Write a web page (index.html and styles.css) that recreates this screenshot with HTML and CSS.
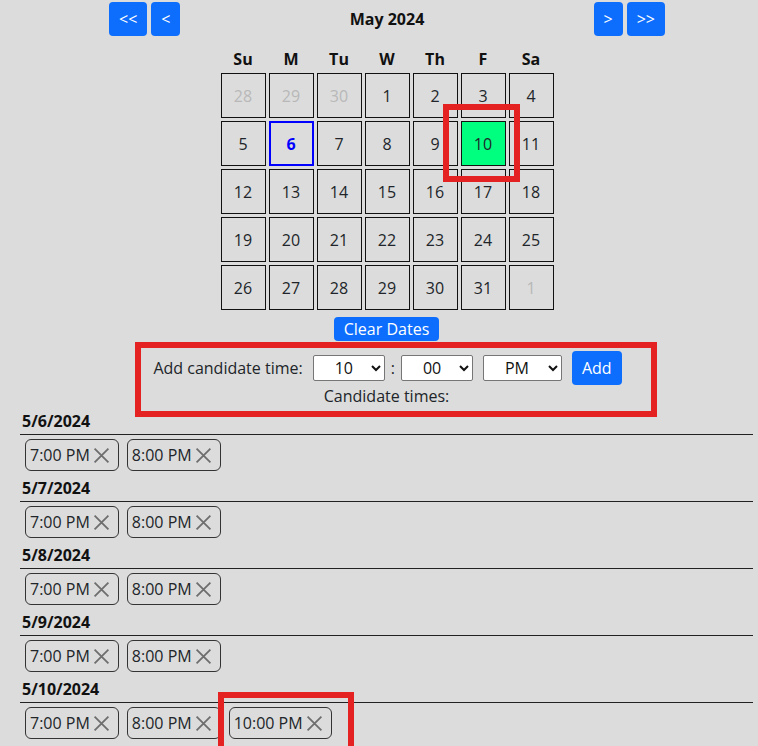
FILE: index.html
```html
<!DOCTYPE html>
<html lang="en">
<head>
<meta charset="utf-8">
<title>Calendar</title>
<link rel="stylesheet" href="styles.css">
</head>
<body>
<div class="page">
  <div class="cal-head">
    <div class="nav">
      <button class="btn">&lt;&lt;</button>
      <button class="btn">&lt;</button>
    </div>
    <div class="title">May 2024</div>
    <div class="nav">
      <button class="btn">&gt;</button>
      <button class="btn">&gt;&gt;</button>
    </div>
  </div>

  <div class="grid">
    <div class="wd">Su</div><div class="wd">M</div><div class="wd">Tu</div><div class="wd">W</div><div class="wd">Th</div><div class="wd">F</div><div class="wd">Sa</div>

    <div class="day muted">28</div><div class="day muted">29</div><div class="day muted">30</div><div class="day">1</div><div class="day">2</div><div class="day">3</div><div class="day">4</div>
    <div class="day">5</div><div class="day today">6</div><div class="day">7</div><div class="day">8</div><div class="day">9</div><div class="day picked">10</div><div class="day">11</div>
    <div class="day">12</div><div class="day">13</div><div class="day">14</div><div class="day">15</div><div class="day">16</div><div class="day">17</div><div class="day">18</div>
    <div class="day">19</div><div class="day">20</div><div class="day">21</div><div class="day">22</div><div class="day">23</div><div class="day">24</div><div class="day">25</div>
    <div class="day">26</div><div class="day">27</div><div class="day">28</div><div class="day">29</div><div class="day">30</div><div class="day">31</div><div class="day muted">1</div>
  </div>

  <div class="clear-wrap"><button class="btn btn-sm">Clear Dates</button></div>

  <div class="controls">
    <div class="ctrl-row">
      <span class="ctrl-label">Add candidate time:</span>
      <select class="tsel tsel-h"><option>10</option></select>
      <span class="colon">:</span>
      <select class="tsel tsel-m"><option>00</option></select>
      <select class="tsel tsel-ap"><option>PM</option></select>
      <button class="btn btn-add">Add</button>
    </div>
    <div class="cand-label">Candidate times:</div>
  </div>

  <div class="dates">
    <section class="date">
      <div class="date-h">5/6/2024</div>
      <div class="chips">
        <span class="chip">7:00 PM<svg width="17" height="17" viewBox="0 0 16 16"><path d="M1.5 1.5L14.5 14.5M14.5 1.5L1.5 14.5"/></svg></span>
        <span class="chip">8:00 PM<svg width="17" height="17" viewBox="0 0 16 16"><path d="M1.5 1.5L14.5 14.5M14.5 1.5L1.5 14.5"/></svg></span>
      </div>
    </section>
    <section class="date">
      <div class="date-h">5/7/2024</div>
      <div class="chips">
        <span class="chip">7:00 PM<svg width="17" height="17" viewBox="0 0 16 16"><path d="M1.5 1.5L14.5 14.5M14.5 1.5L1.5 14.5"/></svg></span>
        <span class="chip">8:00 PM<svg width="17" height="17" viewBox="0 0 16 16"><path d="M1.5 1.5L14.5 14.5M14.5 1.5L1.5 14.5"/></svg></span>
      </div>
    </section>
    <section class="date">
      <div class="date-h">5/8/2024</div>
      <div class="chips">
        <span class="chip">7:00 PM<svg width="17" height="17" viewBox="0 0 16 16"><path d="M1.5 1.5L14.5 14.5M14.5 1.5L1.5 14.5"/></svg></span>
        <span class="chip">8:00 PM<svg width="17" height="17" viewBox="0 0 16 16"><path d="M1.5 1.5L14.5 14.5M14.5 1.5L1.5 14.5"/></svg></span>
      </div>
    </section>
    <section class="date">
      <div class="date-h">5/9/2024</div>
      <div class="chips">
        <span class="chip">7:00 PM<svg width="17" height="17" viewBox="0 0 16 16"><path d="M1.5 1.5L14.5 14.5M14.5 1.5L1.5 14.5"/></svg></span>
        <span class="chip">8:00 PM<svg width="17" height="17" viewBox="0 0 16 16"><path d="M1.5 1.5L14.5 14.5M14.5 1.5L1.5 14.5"/></svg></span>
      </div>
    </section>
    <section class="date">
      <div class="date-h">5/10/2024</div>
      <div class="chips">
        <span class="chip">7:00 PM<svg width="17" height="17" viewBox="0 0 16 16"><path d="M1.5 1.5L14.5 14.5M14.5 1.5L1.5 14.5"/></svg></span>
        <span class="chip">8:00 PM<svg width="17" height="17" viewBox="0 0 16 16"><path d="M1.5 1.5L14.5 14.5M14.5 1.5L1.5 14.5"/></svg></span>
        <span class="chip">10:00 PM<svg width="17" height="17" viewBox="0 0 16 16"><path d="M1.5 1.5L14.5 14.5M14.5 1.5L1.5 14.5"/></svg></span>
      </div>
    </section>
  </div>
</div>

<div class="mark mark-day"></div>
<div class="mark mark-controls"></div>
<div class="mark mark-chip"></div>
</body>
</html>
```

FILE: styles.css
```css
html, body {
  margin: 0;
  background: #dcdcdc;
}

body {
  font-family: "Open Sans", "Noto Sans", sans-serif;
  font-size: 16px;
  line-height: 22px;
  color: #212529;
  overflow: hidden;
  height: 746px;
}

.page {
  padding: 2px 5px 0 20px;
}

.cal-head {
  width: 556px;
  margin: 0 auto;
  display: flex;
  justify-content: space-between;
  align-items: center;
  padding-left: 1px;
}

.nav {
  display: flex;
  gap: 4px;
}

.btn {
  background: #0d6efd;
  color: #fff;
  border: none;
  border-radius: 4px;
  font-family: inherit;
  font-size: 16px;
  line-height: 22px;
  padding: 0 10px;
  height: 34px;
  cursor: pointer;
}

.title {
  font-weight: 700;
  color: #111;
}

.grid {
  display: grid;
  grid-template-columns: repeat(7, 45px);
  gap: 3px;
  width: max-content;
  margin: 12px auto 0;
  padding-left: 1px;
}

.wd {
  text-align: center;
  font-weight: 700;
  height: 22px;
  color: #111;
}

.day {
  box-sizing: border-box;
  height: 45px;
  border: 1px solid #111;
  display: flex;
  align-items: center;
  justify-content: center;
}

.day.muted {
  color: #b8b8b8;
}

.day.today {
  border: 2px solid #0000ff;
  color: #0000ff;
  font-weight: 700;
}

.day.picked {
  background: #00ff7f;
}

.clear-wrap {
  display: flex;
  justify-content: center;
  margin-top: 7px;
}

.btn-sm {
  height: 24px;
  line-height: 24px;
}

.controls {
  margin-top: 10px;
}

.ctrl-row {
  display: flex;
  justify-content: center;
  align-items: center;
  height: 34px;
  padding-left: 2px;
}

.ctrl-label {
  margin-right: 10px;
}

.tsel {
  box-sizing: border-box;
  height: 26px;
  font-family: inherit;
  font-size: 16px;
  color: #111;
  background: #fff;
  border: 1px solid #767676;
  border-radius: 2px;
  padding: 0 0 0 17px;
}

.tsel-h { width: 72px; }
.tsel-m { width: 72px; margin-right: 10px; }
.tsel-ap { width: 79px; margin-right: 10px; }

.colon {
  margin: 0 6px;
}

.btn-add {
  padding: 0 10px;
}

.cand-label {
  text-align: center;
}

.dates {
  margin-top: 3px;
}

.date-h {
  font-weight: 700;
  color: #111;
  padding: 0 0 2px 2px;
  border-bottom: 1px solid #222;
}

.chips {
  display: flex;
  gap: 8px;
  padding-left: 5px;
  margin: 4px 0 6px;
}

.chip {
  display: flex;
  align-items: center;
  border: 1px solid #333;
  border-radius: 6px;
  padding: 4px 8px 4px 4px;
}

.chip svg {
  margin-left: 3px;
  stroke: #6e6e6e;
  stroke-width: 1.7;
  fill: none;
}

.mark {
  position: absolute;
  box-sizing: border-box;
  border: 6px solid #e52222;
  pointer-events: none;
}

.mark-day {
  left: 443px;
  top: 104px;
  width: 77px;
  height: 78px;
}

.mark-controls {
  left: 135px;
  top: 342px;
  width: 522px;
  height: 75px;
}

.mark-chip {
  left: 218px;
  top: 692px;
  width: 136px;
  height: 54px;
  border-bottom: none;
}
```
